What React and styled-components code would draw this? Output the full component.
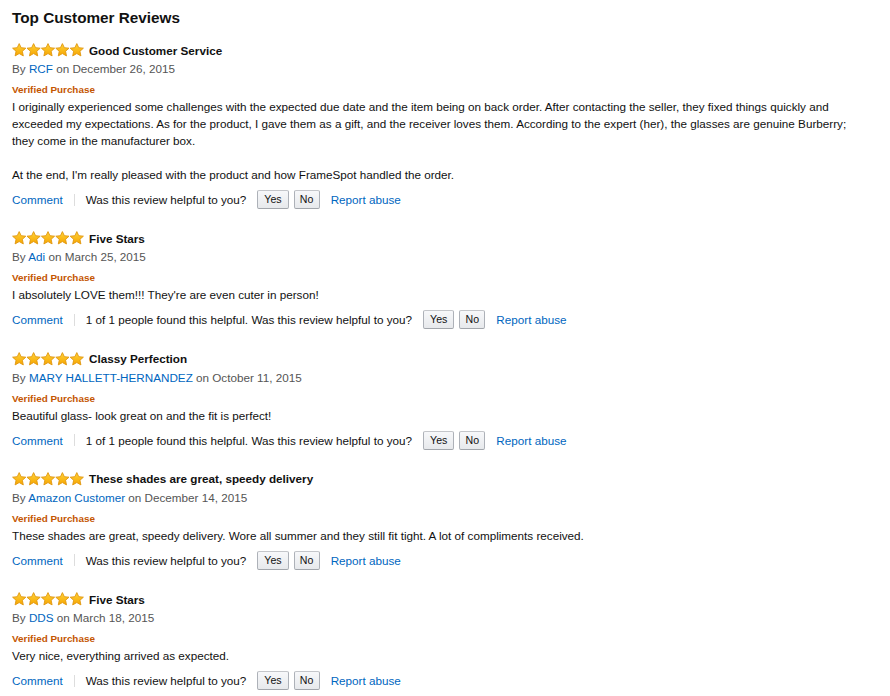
import React from "react";
import styled, { createGlobalStyle } from "styled-components";

const Global = createGlobalStyle`
  html, body { margin: 0; padding: 0; background: #fff; }
  body { font-family: "Liberation Sans", Arial, sans-serif; color: #111; }
`;

const Page = styled.div`
  width: 850px;
  padding: 8px 12px 0 12px;
`;

const Heading = styled.h3`
  margin: 0 0 13px 0;
  font-size: 15.3px;
  line-height: 20px;
  font-weight: 700;
  color: #111;
`;

const Review = styled.div`
  margin-bottom: 20.25px;
`;

const HeaderRow = styled.div`
  display: flex;
  align-items: center;
  gap: 5px;
  height: 18px;
`;

const ReviewTitle = styled.span`
  font-size: 11.7px;
  font-weight: 700;
  color: #111;
`;

const ByLine = styled.div`
  font-size: 11.7px;
  line-height: 19px;
  color: #555;
`;

const Link = styled.a`
  color: #0066c0;
  text-decoration: none;
  cursor: pointer;
`;

const Verified = styled.div`
  margin-top: 4px;
  font-size: 9.9px;
  line-height: 16px;
  font-weight: 700;
  color: #c45500;
`;

const Body = styled.div`
  font-size: 11.7px;
  line-height: 17px;
  color: #111;
`;

const Para = styled.p`
  margin: 0;
  & + & { margin-top: 17px; }
`;

const Actions = styled.div`
  margin-top: 7px;
  height: 19px;
  display: flex;
  align-items: center;
  font-size: 11.7px;
  color: #111;
`;

const Sep = styled.span`
  width: 1px;
  height: 12px;
  background: #ddd;
  margin: 0 11px;
`;

const Question = styled.span`
  margin-right: 11px;
`;

const Btn = styled.button`
  height: 19px;
  box-sizing: border-box;
  padding: 0 ${(p) => (p.$narrow ? "5px" : "6px")};
  min-width: ${(p) => (p.$narrow ? "26px" : "31px")};
  margin-right: ${(p) => (p.$last ? "11px" : "5px")};
  border: 1px solid #adb1b8;
  border-top-color: #c4c6ca;
  border-bottom-color: #a2a6ac;
  border-radius: 2px;
  background: linear-gradient(#f7f8fa, #e7e9ec);
  font-family: "Liberation Sans", Arial, sans-serif;
  font-size: 10.6px;
  color: #111;
  line-height: 17px;
`;

const Star = ({ x }) => (
  <path
    transform={`translate(${x},0)`}
    d="M7.2 0.6 L9.15 4.7 L13.8 5.2 L10.35 8.25 L11.3 12.9 L7.2 10.55 L3.1 12.9 L4.05 8.25 L0.6 5.2 L5.25 4.7 Z"
    fill="url(#sg)"
    stroke="#e0960f"
    strokeWidth="0.9"
    strokeLinejoin="round"
  />
);

const Stars = () => (
  <svg width="72" height="14" viewBox="0 0 72 14">
    <defs>
      <linearGradient id="sg" x1="0" y1="0" x2="0" y2="1">
        <stop offset="0" stopColor="#ffd43a" />
        <stop offset="1" stopColor="#f6a400" />
      </linearGradient>
    </defs>
    {[0, 14.4, 28.8, 43.2, 57.6].map((x) => (
      <Star key={x} x={x} />
    ))}
  </svg>
);

const reviews = [
  {
    title: "Good Customer Service",
    author: "RCF",
    date: "December 26, 2015",
    body: [
      "I originally experienced some challenges with the expected due date and the item being on back order. After contacting the seller, they fixed things quickly and exceeded my expectations. As for the product, I gave them as a gift, and the receiver loves them. According to the expert (her), the glasses are genuine Burberry; they come in the manufacturer box.",
      "At the end, I'm really pleased with the product and how FrameSpot handled the order.",
    ],
  },
  {
    title: "Five Stars",
    author: "Adi",
    date: "March 25, 2015",
    body: ["I absolutely LOVE them!!! They're are even cuter in person!"],
    helpful: "1 of 1 people found this helpful. ",
  },
  {
    title: "Classy Perfection",
    author: "MARY HALLETT-HERNANDEZ",
    date: "October 11, 2015",
    body: ["Beautiful glass- look great on and the fit is perfect!"],
    helpful: "1 of 1 people found this helpful. ",
  },
  {
    title: "These shades are great, speedy delivery",
    author: "Amazon Customer",
    date: "December 14, 2015",
    body: [
      "These shades are great, speedy delivery. Wore all summer and they still fit tight. A lot of compliments received.",
    ],
  },
  {
    title: "Five Stars",
    author: "DDS",
    date: "March 18, 2015",
    body: ["Very nice, everything arrived as expected."],
  },
];

export default function App() {
  return (
    <>
      <Global />
      <Page>
        <Heading>Top Customer Reviews</Heading>
        {reviews.map((r, i) => (
          <Review key={i}>
            <HeaderRow>
              <Stars />
              <ReviewTitle>{r.title}</ReviewTitle>
            </HeaderRow>
            <ByLine>
              By <Link>{r.author}</Link> on {r.date}
            </ByLine>
            <Verified>Verified Purchase</Verified>
            <Body>
              {r.body.map((p, j) => (
                <Para key={j}>{p}</Para>
              ))}
            </Body>
            <Actions>
              <Link>Comment</Link>
              <Sep />
              <Question>
                {r.helpful || ""}Was this review helpful to you?
              </Question>
              <Btn>Yes</Btn>
              <Btn $narrow $last>
                No
              </Btn>
              <Link>Report abuse</Link>
            </Actions>
          </Review>
        ))}
      </Page>
    </>
  );
}
